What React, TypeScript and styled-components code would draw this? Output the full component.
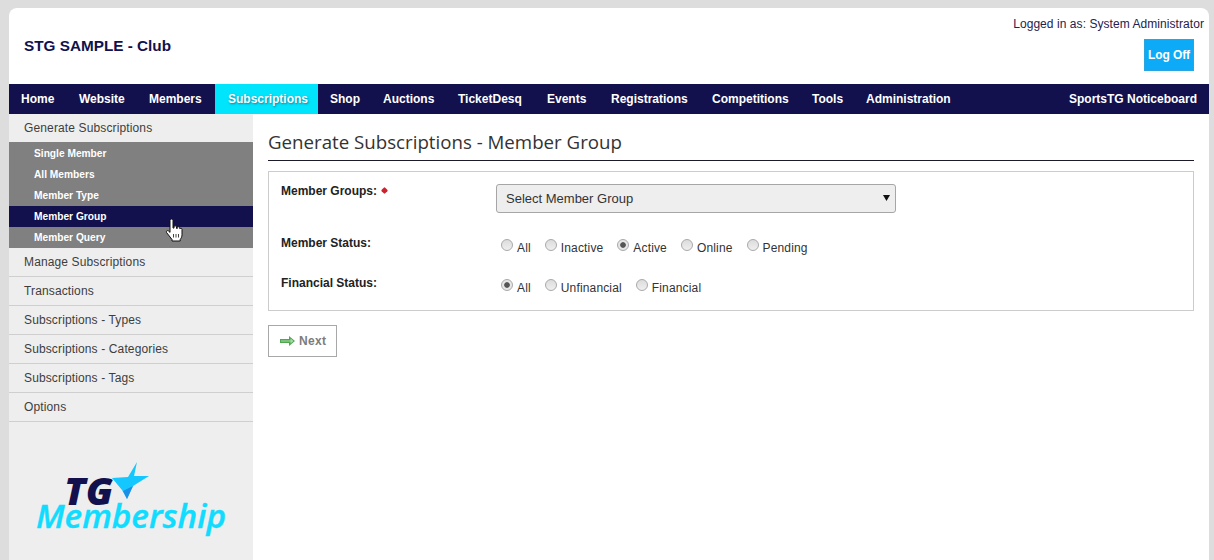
import React from "react";
import styled, { createGlobalStyle } from "styled-components";

const Global = createGlobalStyle`
  html, body { margin: 0; padding: 0; height: 560px; overflow: hidden; background: #dddddd; }
  body { font-family: "Liberation Sans", Arial, sans-serif; font-size: 12px; }
  * { box-sizing: border-box; }
`;
const navy = "#13114d";

const Page = styled.div`
  margin: 8px 5px 0 9px;
  height: 552px;
  background: #fff;
  border-radius: 8px 8px 0 0;
  display: flex;
  flex-direction: column;
  overflow: hidden;
`;
const Header = styled.header`
  height: 76px;
  display: flex;
  justify-content: space-between;
  padding: 0 5px 0 15px;
`;
const ClubName = styled.h1`
  margin: 29px 0 0;
  font-size: 15.3px;
  line-height: 17px;
  font-weight: 700;
  color: ${navy};
`;
const Account = styled.div`
  display: flex;
  flex-direction: column;
  align-items: flex-end;
  padding-top: 9px;
`;
const LoggedIn = styled.div`
  font-size: 12px;
  line-height: 15px;
  letter-spacing: 0.06px;
  color: #25214f;
`;
const LogOff = styled.button`
  margin: 7px 10px 0 0;
  width: 50px;
  height: 32px;
  border: 1px solid #2aa5df;
  background: #0daaf7;
  color: #fff;
  font: 700 12px "Liberation Sans", Arial, sans-serif;
  letter-spacing: -0.1px;
  padding: 0;
`;
const NavBar = styled.nav`
  height: 30px;
  background: ${navy};
  display: flex;
  align-items: stretch;
  flex: none;
`;
const NavItem = styled.a<{ $active?: boolean; $w?: number }>`
  display: flex;
  align-items: center;
  flex: none;
  width: ${(p) => (p.$w ? `${p.$w}px` : "auto")};
  padding: 0 12px 0 ${(p) => (p.$active ? 13 : 12)}px;
  font-weight: 700;
  font-size: 12px;
  white-space: nowrap;
  color: #fff;
  background: ${(p) => (p.$active ? "#00e4fc" : "transparent")};
  text-shadow: ${(p) => (p.$active ? "1px 1px 2px rgba(0,60,90,.55)" : "none")};
`;
const NavSpacer = styled.div`
  flex: 1;
`;
const Body = styled.div`
  flex: 1;
  display: flex;
  min-height: 0;
`;
const Sidebar = styled.aside`
  width: 244px;
  flex: none;
  background: #eeeeee;
  display: flex;
  flex-direction: column;
  position: relative;
`;
const SideItem = styled.a<{ $first?: boolean }>`
  display: flex;
  align-items: center;
  height: ${(p) => (p.$first ? 28 : 29)}px;
  padding: 0 0 0 15px;
  color: #3d3d3d;
  font-size: 12px;
  letter-spacing: 0.13px;
  border-bottom: ${(p) => (p.$first ? "none" : "1px solid #cfcfcf")};
`;
const SubMenu = styled.div`
  background: #808080;
  padding-top: 1px;
  display: flex;
  flex-direction: column;
`;
const SubItem = styled.a<{ $active?: boolean }>`
  display: flex;
  align-items: center;
  height: 21px;
  padding: 0 0 0 25px;
  font-size: 10.2px;
  font-weight: 700;
  color: #fff;
  background: ${(p) => (p.$active ? navy : "transparent")};
`;
const Logo = styled.div`
  flex: 1;
  display: flex;
  justify-content: center;
  padding-top: 38px;
`;
const Cursor = styled.svg`
  position: absolute;
  left: 156px;
  top: 104px;
`;
const Main = styled.main`
  flex: 1;
  padding: 13px 15px 0;
`;
const Title = styled.h2`
  margin: 0 0 10px;
  height: 34px;
  border-bottom: 1px solid #1b1b2b;
  font: 400 18.7px/30px "Open Sans", sans-serif;
  color: #333;
`;
const FormBox = styled.section`
  height: 140px;
  border: 1px solid #cccccc;
  padding: 12px 12px 0;
  display: flex;
  flex-direction: column;
`;
const Row = styled.div<{ $h: number }>`
  display: flex;
  height: ${(p) => p.$h}px;
`;
const Label = styled.label`
  width: 215px;
  flex: none;
  font-weight: 700;
  font-size: 12px;
  line-height: 14px;
  color: #222;
  display: flex;
  align-items: flex-start;
  gap: 4px;
`;
const Required = styled.i`
  width: 5px;
  height: 5px;
  margin: 4px 0 0 1px;
  background: #d0222e;
  transform: rotate(45deg);
  border-radius: 1px;
`;
const Select = styled.div`
  width: 400px;
  height: 29px;
  border: 1px solid #a6a6a6;
  border-radius: 3px;
  background: #eeeeee;
  display: flex;
  align-items: center;
  justify-content: space-between;
  padding: 0 5px 0 9px;
  font-size: 13px;
  color: #333;
`;
const Arrow = styled.svg`
  margin-top: -1px;
`;
const Radios = styled.div`
  display: flex;
  gap: 14px;
  padding: 4px 0 0 5px;
  height: 22px;
`;
const RadioLabel = styled.label`
  display: flex;
  align-items: flex-start;
  gap: 4px;
  font-size: 12px;
  line-height: 14px;
  letter-spacing: 0.15px;
  color: #333;
`;
const Radio = styled.input`
  appearance: none;
  margin: 0;
  width: 12px;
  height: 12px;
  border-radius: 50%;
  border: 1px solid #a9a9a9;
  background: linear-gradient(#dcdcdc, #efefef);
  flex: none;
  position: relative;
  top: -1px;
  &:checked {
    background: radial-gradient(circle, #555 0, #555 2.4px, #e6e6e6 3.2px);
  }
`;
const RadioText = styled.span`
  position: relative;
  top: 1px;
`;
const NextButton = styled.button`
  margin-top: 14px;
  width: 69px;
  height: 32px;
  border: 1px solid #a8a8a8;
  background: #fff;
  display: flex;
  align-items: center;
  gap: 4px;
  padding: 0 0 0 11px;
  font: 700 12px "Liberation Sans", Arial, sans-serif;
  color: #7c7c7c;
  letter-spacing: 0.3px;
`;

const navItems: [string, number][] = [
  ["Home", 58], ["Website", 70], ["Members", 78], ["Subscriptions", 103], ["Shop", 53], ["Auctions", 75],
  ["TicketDesq", 89], ["Events", 64], ["Registrations", 101], ["Competitions", 100], ["Tools", 54], ["Administration", 110],
];
const subs = ["Single Member", "All Members", "Member Type", "Member Group", "Member Query"];
const sideItems = ["Manage Subscriptions", "Transactions", "Subscriptions - Types", "Subscriptions - Categories", "Subscriptions - Tags", "Options"];

const RadioSet = ({ name, options, checked }: { name: string; options: string[]; checked: string }) => (
  <Radios>
    {options.map((o) => (
      <RadioLabel key={o}>
        <Radio type="radio" name={name} defaultChecked={o === checked} />
        <RadioText>{o}</RadioText>
      </RadioLabel>
    ))}
  </Radios>
);

export default function App() {
  return (
    <>
      <Global />
      <Page>
        <Header>
          <ClubName>STG SAMPLE - Club</ClubName>
          <Account>
            <LoggedIn>Logged in as: System Administrator</LoggedIn>
            <LogOff>Log Off</LogOff>
          </Account>
        </Header>
        <NavBar>
          {navItems.map(([n, w]) => (
            <NavItem key={n} $w={w} $active={n === "Subscriptions"}>{n}</NavItem>
          ))}
          <NavSpacer />
          <NavItem>SportsTG Noticeboard</NavItem>
        </NavBar>
        <Body>
          <Sidebar>
            <SideItem $first>Generate Subscriptions</SideItem>
            <SubMenu>
              {subs.map((s) => (
                <SubItem key={s} $active={s === "Member Group"}>{s}</SubItem>
              ))}
            </SubMenu>
            {sideItems.map((s) => (
              <SideItem key={s}>{s}</SideItem>
            ))}
            <Logo>
              <svg width="200" height="84" viewBox="0 0 200 84">
                <polygon points="106,2 103,16 118,16 102,26 96,39 91,30 81,18 97,17" fill="#14c8ff" />
                <polygon points="96,39 102,26 92,31" fill="#1a8fe8" />
                <text x="33" y="45" fontFamily="Open Sans, sans-serif" fontWeight="800" fontStyle="italic" fontSize="37" fill="#13114d" textLength="49" lengthAdjust="spacingAndGlyphs">TG</text>
                <text x="5" y="68" fontFamily="Open Sans, sans-serif" fontWeight="600" fontStyle="italic" fontSize="32" fill="#0fdcff" stroke="#0fdcff" strokeWidth="0.4" textLength="190" lengthAdjust="spacingAndGlyphs">Membership</text>
              </svg>
            </Logo>
            <Cursor width="18" height="24" viewBox="0 0 18 24">
              <path d="M5 2.5a1.5 1.5 0 0 1 3 0V10l1 .1V8.8a1.3 1.3 0 0 1 2.5 0v1.6l.8.1V9.6a1.3 1.3 0 0 1 2.4 0v1l.6-.1a1.2 1.2 0 0 1 1.7 1.1v5.2c0 2-.8 3.2-1.8 4.7v1.5H7v-1.5L1.6 14.6c-.9-1.3.8-2.7 2-1.6L5 14.4z" fill="#fff" stroke="#111" strokeWidth="1" strokeLinejoin="round" />
              <path d="M8.5 16v3.5M11 16v3.5M13.5 16v3.5" stroke="#111" strokeWidth=".8" />
            </Cursor>
          </Sidebar>
          <Main>
            <Title>Generate Subscriptions - Member Group</Title>
            <FormBox>
              <Row $h={52}>
                <Label>Member Groups: <Required /></Label>
                <Select>
                  <span>Select Member Group</span>
                  <Arrow width="7" height="6" viewBox="0 0 7 6"><polygon points="0,0 7,0 3.5,6" fill="#111" /></Arrow>
                </Select>
              </Row>
              <Row $h={40}>
                <Label>Member Status:</Label>
                <RadioSet name="member" options={["All", "Inactive", "Active", "Online", "Pending"]} checked="Active" />
              </Row>
              <Row $h={30}>
                <Label>Financial Status:</Label>
                <RadioSet name="financial" options={["All", "Unfinancial", "Financial"]} checked="All" />
              </Row>
            </FormBox>
            <NextButton>
              <svg width="15" height="10" viewBox="0 0 15 10">
                <path d="M0 3h9V0l6 5-6 5V7H0z" fill="#4fa84f" />
                <path d="M1 4.4h9.5V2.4l3 2.6-3 2.6V5.6H1z" fill="#a5dba5" />
              </svg>
              Next
            </NextButton>
          </Main>
        </Body>
      </Page>
    </>
  );
}
